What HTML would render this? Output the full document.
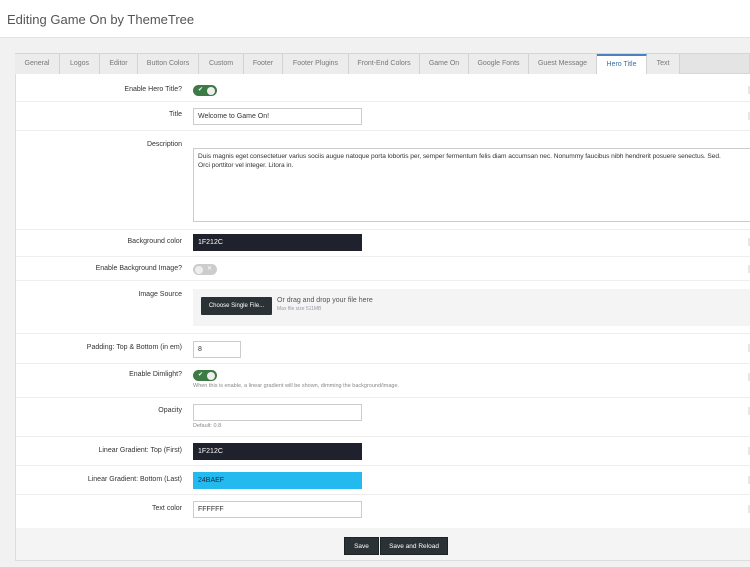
<!DOCTYPE html>
<html><head><style>
*{box-sizing:border-box;margin:0;padding:0}
body{width:750px;height:567px;overflow:hidden;background:#f1f1f1;font-family:"Liberation Sans",sans-serif;font-size:7px;color:#333;position:relative}
.top{position:absolute;left:0;top:0;width:750px;height:38px;background:#fff;border-bottom:1px solid #e3e3e3}
.top h1{position:absolute;left:7px;top:12px;font-size:13px;font-weight:normal;color:#555}
.panel{position:absolute;left:15px;top:53px;width:740px;height:508px;background:#fff;border:1px solid #ddd}
.tabs{position:absolute;left:15px;top:53px;width:735px;height:21px;background:#e4e4e4;border:1px solid #d6d6d6}
.tab{position:absolute;top:54px;height:20px;line-height:20px;text-align:center;color:#777;font-size:7px;border-right:1px solid #d3d3d3;background:#ececec}
.tab.a{background:#fff;color:#3c6fa6;border-top:2px solid #4a82bd;line-height:17px}
.row{position:absolute;left:16px;width:734px;border-bottom:1px solid #eee}
.lbl{position:absolute;right:568px;text-align:right;font-size:7px;color:#333;white-space:nowrap}
.inp{position:absolute;left:193px;height:17px;width:169px;border:1px solid #ccc;background:#fff;font-size:7px;line-height:15px;padding-left:4px;color:#333}
.dark{background:#1f212c;color:#fff;border-color:#1f212c}
.blue{background:#24baef;color:#1a2a3a;border-color:#24baef}
.tg{position:absolute;left:193px;width:24px;height:11px;border-radius:6px}
.tg.on{background:#3d7a46}
.tg.off{background:#ccc}
.tg span{position:absolute;top:0;line-height:11px;color:#fff;font-size:6px}
.knob{position:absolute;top:1.5px;width:8px;height:8px;border-radius:50%;background:#eee}
.hint{position:absolute;left:193px;font-size:5.5px;color:#888;white-space:nowrap}
.edge{position:absolute;left:748px;width:3px;height:8px;background:#e6e6e6}
.btn{position:absolute;top:537px;height:18px;background:#2b3236;color:#fff;font-size:6.5px;line-height:18px;text-align:center;border:1px solid #1d2225}
</style></head><body>
<div class="top"><h1>Editing Game On by ThemeTree</h1></div>
<div class="panel"></div>
<div class="tabs"></div>
<div class="tab" style="left:15px;width:45px">General</div>
<div class="tab" style="left:60px;width:40px">Logos</div>
<div class="tab" style="left:100px;width:38px">Editor</div>
<div class="tab" style="left:138px;width:61px">Button Colors</div>
<div class="tab" style="left:199px;width:45px">Custom</div>
<div class="tab" style="left:244px;width:39px">Footer</div>
<div class="tab" style="left:283px;width:66px">Footer Plugins</div>
<div class="tab" style="left:349px;width:71px">Front-End Colors</div>
<div class="tab" style="left:420px;width:49px">Game On</div>
<div class="tab" style="left:469px;width:60px">Google Fonts</div>
<div class="tab" style="left:529px;width:68px">Guest Message</div>
<div class="tab a" style="left:597px;width:50px">Hero Title</div>
<div class="tab" style="left:647px;width:33px">Text</div>

<div class="row" style="top:74px;height:28px"></div>
<div class="lbl" style="top:86px;right:568px">Enable Hero Title?</div>
<div class="tg on" style="top:85px"><span style="left:5px">✔</span><div class="knob" style="left:14px"></div></div>

<div class="row" style="top:102px;height:29px"></div>
<div class="lbl" style="top:111px">Title</div>
<div class="inp" style="top:108px">Welcome to Game On!</div>

<div class="row" style="top:131px;height:99px"></div>
<div class="lbl" style="top:141px">Description</div>
<div class="inp" style="top:148px;height:74px;width:560px;line-height:9px;padding-top:3px;font-size:6.6px;letter-spacing:-0.05px;white-space:nowrap;overflow:hidden">Duis magnis eget consectetuer varius sociis augue natoque porta lobortis per, semper fermentum felis diam accumsan nec. Nonummy faucibus nibh hendrerit posuere senectus. Sed.<br>Orci porttitor vel integer. Litora in.</div>

<div class="row" style="top:230px;height:27px"></div>
<div class="lbl" style="top:238px">Background color</div>
<div class="inp dark" style="top:234px">1F212C</div>

<div class="row" style="top:257px;height:24px"></div>
<div class="lbl" style="top:265px">Enable Background Image?</div>
<div class="tg off" style="top:264px"><div class="knob" style="left:2px"></div><span style="left:14px">✕</span></div>

<div class="row" style="top:281px;height:53px"></div>
<div class="lbl" style="top:291px">Image Source</div>
<div style="position:absolute;left:193px;top:289px;width:557px;height:37px;background:#f4f4f4"></div>
<div style="position:absolute;left:201px;top:297px;width:71px;height:18px;background:#2b3236;color:#fff;font-size:6px;line-height:18px;text-align:center;border-radius:1px">Choose Single File...</div>
<div style="position:absolute;left:277px;top:297px;font-size:7px;color:#555">Or drag and drop your file here</div>
<div style="position:absolute;left:277px;top:306px;font-size:5px;color:#99a">Max file size 511MB</div>

<div class="row" style="top:334px;height:30px"></div>
<div class="lbl" style="top:344px">Padding: Top &amp; Bottom (in em)</div>
<div class="inp" style="top:341px;width:48px">8</div>

<div class="row" style="top:364px;height:34px"></div>
<div class="lbl" style="top:371px">Enable Dimlight?</div>
<div class="tg on" style="top:370px"><span style="left:5px">✔</span><div class="knob" style="left:14px"></div></div>
<div class="hint" style="top:383px">When this is enable, a linear gradient will be shown, dimming the background/image.</div>

<div class="row" style="top:398px;height:39px"></div>
<div class="lbl" style="top:407px">Opacity</div>
<div class="inp" style="top:404px"></div>
<div class="hint" style="top:423px">Default: 0.8</div>

<div class="row" style="top:437px;height:29px"></div>
<div class="lbl" style="top:447px">Linear Gradient: Top (First)</div>
<div class="inp dark" style="top:443px">1F212C</div>

<div class="row" style="top:466px;height:29px"></div>
<div class="lbl" style="top:476px">Linear Gradient: Bottom (Last)</div>
<div class="inp blue" style="top:472px">24BAEF</div>

<div class="row" style="top:495px;height:33px;border:none"></div>
<div class="lbl" style="top:505px">Text color</div>
<div class="inp" style="top:501px">FFFFFF</div>

<div style="position:absolute;left:16px;top:528px;width:734px;height:32px;background:#f4f4f4"></div>
<div class="btn" style="left:344px;width:35px">Save</div>
<div class="btn" style="left:380px;width:68px">Save and Reload</div>

<div class="edge" style="top:86px"></div>
<div class="edge" style="top:112px"></div>
<div class="edge" style="top:238px"></div>
<div class="edge" style="top:265px"></div>
<div class="edge" style="top:344px"></div>
<div class="edge" style="top:373px"></div>
<div class="edge" style="top:407px"></div>
<div class="edge" style="top:447px"></div>
<div class="edge" style="top:476px"></div>
<div class="edge" style="top:505px"></div>
</body></html>
